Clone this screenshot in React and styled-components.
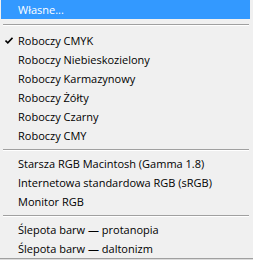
import React from "react";
import styled, { createGlobalStyle } from "styled-components";

const Global = createGlobalStyle`
  html, body { margin: 0; padding: 0; background: #f0f0f0; }
  body { font-family: "Open Sans", "Noto Sans", Arial, sans-serif; }
`;

const Menu = styled.div`
  width: 253px;
  background: #f0f0f0;
  border-bottom: 1px solid #a0a0a0;
  box-shadow: 0 1px 0 #dcdcdc;
  margin-bottom: 1px;
  display: flex;
  flex-direction: column;
`;

const Item = styled.div`
  height: 19px;
  margin: 0 3px 0 1px;
  padding-left: 17px;
  position: relative;
  display: flex;
  align-items: center;
  font-size: 11px;
  letter-spacing: 0;
  color: ${(p) => (p.$active ? "#ffffff" : "#000000")};
  background: ${(p) => (p.$active ? "#3399ff" : "transparent")};
  white-space: nowrap;
`;

const Separator = styled.div`
  height: ${(p) => p.$h}px;
  display: flex;
  align-items: flex-start;
  padding: 0 4px 0 3px;
  box-sizing: border-box;
  padding-top: ${(p) => p.$top}px;
`;

const Line = styled.div`
  flex: 1;
  height: 1px;
  background: #a0a0a0;
  box-shadow: 0 1px 0 #ffffff;
`;

const Check = styled.svg`
  position: absolute;
  left: 4px;
  top: 6px;
`;

const CheckMark = () => (
  <Check width="8" height="7" viewBox="0 0 8 7">
    <path d="M0.5 3.5 L2.8 5.8 L7.5 0.8" fill="none" stroke="#000" strokeWidth="1.6" />
  </Check>
);

const groups = [
  [{ label: "Roboczy CMYK", checked: true }, { label: "Roboczy Niebieskozielony" }, { label: "Roboczy Karmazynowy" }, { label: "Roboczy Żółty" }, { label: "Roboczy Czarny" }, { label: "Roboczy CMY" }],
  [{ label: "Starsza RGB Macintosh (Gamma 1.8)" }, { label: "Internetowa standardowa RGB (sRGB)" }, { label: "Monitor RGB" }],
  [{ label: "Ślepota barw — protanopia" }, { label: "Ślepota barw — daltonizm" }],
];

export default function App() {
  return (
    <>
      <Global />
      <Menu>
        <Item $active>Własne...</Item>
        {groups.map((g, gi) => (
          <React.Fragment key={gi}>
            <Separator $h={gi === 0 ? 12 : 9} $top={gi === 0 ? 5 : 4}>
              <Line />
            </Separator>
            {g.map((it) => (
              <Item key={it.label}>
                {it.checked && <CheckMark />}
                {it.label}
              </Item>
            ))}
          </React.Fragment>
        ))}
      </Menu>
    </>
  );
}
